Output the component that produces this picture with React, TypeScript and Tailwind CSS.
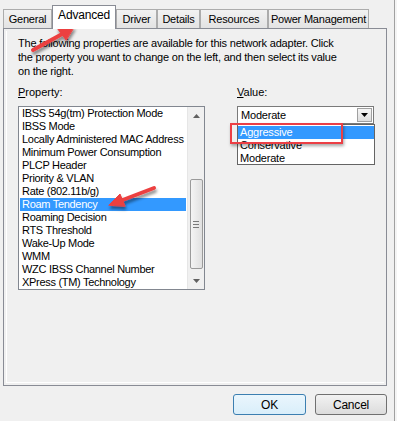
import React from 'react';

const tabs = ['General', 'Advanced', 'Driver', 'Details', 'Resources', 'Power Management'];
const tabWidths: Record<string, string> = {
  General: 'w-[49px]',
  Advanced: 'w-[64px]',
  Driver: 'w-[41px]',
  Details: 'w-[43px]',
  Resources: 'w-[68px]',
  'Power Management': 'w-[101px]',
};

const properties = [
  'IBSS 54g(tm) Protection Mode',
  'IBSS Mode',
  'Locally Administered MAC Address',
  'Minimum Power Consumption',
  'PLCP Header',
  'Priority & VLAN',
  'Rate (802.11b/g)',
  'Roam Tendency',
  'Roaming Decision',
  'RTS Threshold',
  'Wake-Up Mode',
  'WMM',
  'WZC IBSS Channel Number',
  'XPress (TM) Technology',
];

const values = ['Aggressive', 'Conservative', 'Moderate'];

function Arrows() {
  // red annotation arrows drawn over the dialog
  return (
    <svg className="absolute inset-0 pointer-events-none" width="397" height="421" viewBox="0 0 397 421">
      <defs>
        <filter id="sh" x="-20%" y="-20%" width="140%" height="140%">
          <feGaussianBlur in="SourceAlpha" stdDeviation="1.5" />
          <feOffset dx="1" dy="3" result="b" />
          <feComponentTransfer>
            <feFuncA type="linear" slope="0.45" />
          </feComponentTransfer>
          <feMerge>
            <feMergeNode />
            <feMergeNode in="SourceGraphic" />
          </feMerge>
        </filter>
      </defs>
      <g filter="url(#sh)" fill="#ec4141" stroke="#ec4141" strokeLinecap="round" strokeLinejoin="round">
        <line x1="33" y1="50" x2="64" y2="33" strokeWidth="4" />
        <polygon points="74,27 57,28 66,40" strokeWidth="1" />
        <line x1="154" y1="188" x2="120" y2="201" strokeWidth="4" />
        <polygon points="109,205 120,194 125,206" strokeWidth="1" />
      </g>
    </svg>
  );
}

export default function App() {
  return (
    <div className="relative flex w-[397px] h-[421px] overflow-hidden bg-[#f0f0f0] text-[11px] leading-[14px] text-black font-['Liberation_Sans',Arial,sans-serif]">
      <div className="w-[394px] flex flex-col">
        {/* tab strip */}
        <div className="flex items-end h-[28px] pl-[3px] pt-[5px]">
          {tabs.map((t) => {
            const sel = t === 'Advanced';
            return (
              <div
                key={t}
                className={
                  sel
                    ? `relative z-10 -mb-px h-[24px] bg-white border border-b-0 border-[#898c95] flex items-start justify-center pt-[2px] text-[12px] ${tabWidths[t]}`
                    : `h-[19px] bg-gradient-to-b from-[#f2f2f2] to-[#e3e3e3] border border-b-0 border-[#acacac] flex items-start justify-center pt-[2px] ${tabWidths[t]}`
                }
              >
                <span className="whitespace-nowrap tracking-[-0.2px]">{t}</span>
              </div>
            );
          })}
        </div>

        {/* tab page */}
        <div className="ml-[3px] w-[384px] h-[358px] border border-[#898c95] p-[2px]">
          <div className="h-full border border-white border-t-0 border-r-0 pl-[11px] pt-[5px]">
            <div className="tracking-[-0.2px] whitespace-nowrap">
              <div>The following properties are available for this network adapter. Click</div>
              <div>the property you want to change on the left, and then select its value</div>
              <div>on the right.</div>
            </div>

            <div className="flex gap-[32px] mt-[7px]">
              {/* property list */}
              <div className="flex flex-col">
                <div className="h-[14px]">
                  <span className="underline">P</span>roperty:
                </div>
                <div className="mt-[7px] w-[187px] h-[184px] border border-[#828790] bg-white flex">
                  <div className="flex-1 pt-0 tracking-[-0.3px]">
                    {properties.map((p) => (
                      <div
                        key={p}
                        className={
                          p === 'Roam Tendency'
                            ? 'h-[13px] leading-[13px] ml-px w-[166px] pl-[2px] bg-[#3399ff] text-white whitespace-nowrap'
                            : 'h-[13px] leading-[13px] ml-px pl-[2px] whitespace-nowrap'
                        }
                      >
                        {p}
                      </div>
                    ))}
                  </div>
                  {/* scrollbar */}
                  <div className="w-[17px] bg-[#f0f0f0] flex flex-col items-center border-l border-[#e6e6e6]">
                    <div className="h-[17px] flex items-center justify-center">
                      <svg width="7" height="4" viewBox="0 0 7 4">
                        <path d="M0 4 L3.5 0 L7 4 Z" fill="#606060" />
                      </svg>
                    </div>
                    <div className="mt-[55px] w-[13px] h-[90px] rounded-[2px] border border-[#9a9a9a] bg-gradient-to-r from-[#f4f4f4] to-[#e0e0e0] flex flex-col items-center justify-center gap-[2px]">
                      <div className="w-[6px] h-px bg-[#7a7a7a]" />
                      <div className="w-[6px] h-px bg-[#7a7a7a]" />
                      <div className="w-[6px] h-px bg-[#7a7a7a]" />
                    </div>
                    <div className="flex-1" />
                    <div className="h-[17px] flex items-center justify-center">
                      <svg width="7" height="4" viewBox="0 0 7 4">
                        <path d="M0 0 L3.5 4 L7 0 Z" fill="#606060" />
                      </svg>
                    </div>
                  </div>
                </div>
              </div>

              {/* value */}
              <div className="flex flex-col">
                <div className="h-[14px]">
                  <span className="underline">V</span>alue:
                </div>
                <div className="relative mt-[7px] w-[137px] h-[18px] border border-[#7a7a7a] bg-white flex items-center">
                  <span className="flex-1 pl-[3px] tracking-[-0.2px]">Moderate</span>
                  <div className="w-[15px] h-[14px] mr-px border border-[#a0a0a0] bg-gradient-to-b from-[#f6f6f6] to-[#dddddd] flex items-center justify-center">
                    <svg width="7" height="4" viewBox="0 0 7 4">
                      <path d="M0 0 L3.5 4 L7 0 Z" fill="#000" />
                    </svg>
                  </div>

                  {/* open drop-down list */}
                  <div className="absolute left-[-1px] top-[17px] w-[138px] h-[41px] border border-[#646464] bg-white z-10 pt-px tracking-[-0.2px]">
                    {values.map((v) => (
                      <div
                        key={v}
                        className={
                          v === 'Aggressive'
                            ? 'h-[13px] leading-[13px] pl-[2px] bg-[#3399ff] text-white'
                            : 'h-[13px] leading-[13px] pl-[2px]'
                        }
                      >
                        {v}
                      </div>
                    ))}
                  </div>
                  {/* red highlight box */}
                  <div className="absolute left-[-8px] top-[16px] w-[113px] h-[21px] border-[2.5px] border-[#ec3f45] z-20 shadow-[1px_2px_3px_rgba(0,0,0,0.35)]" />
                </div>
              </div>
            </div>
          </div>
        </div>

        {/* buttons */}
        <div className="flex justify-end gap-[9px] mt-[8px] pr-[7px]">
          <button className="w-[73px] h-[21px] rounded-[3px] border border-[#3c7fb1] bg-gradient-to-b from-[#eaf6fd] to-[#d9eefa] text-[12px] tracking-[-0.2px]">
            OK
          </button>
          <button className="w-[72px] h-[21px] rounded-[3px] border border-[#707070] bg-gradient-to-b from-[#f2f2f2] to-[#dcdcdc] text-[12px] tracking-[-0.2px]">
            Cancel
          </button>
        </div>
      </div>
      <div className="w-px bg-[#a0a0a0]" />
      <div className="w-[2px] bg-[#f4f4f4]" />

      <Arrows />
    </div>
  );
}
